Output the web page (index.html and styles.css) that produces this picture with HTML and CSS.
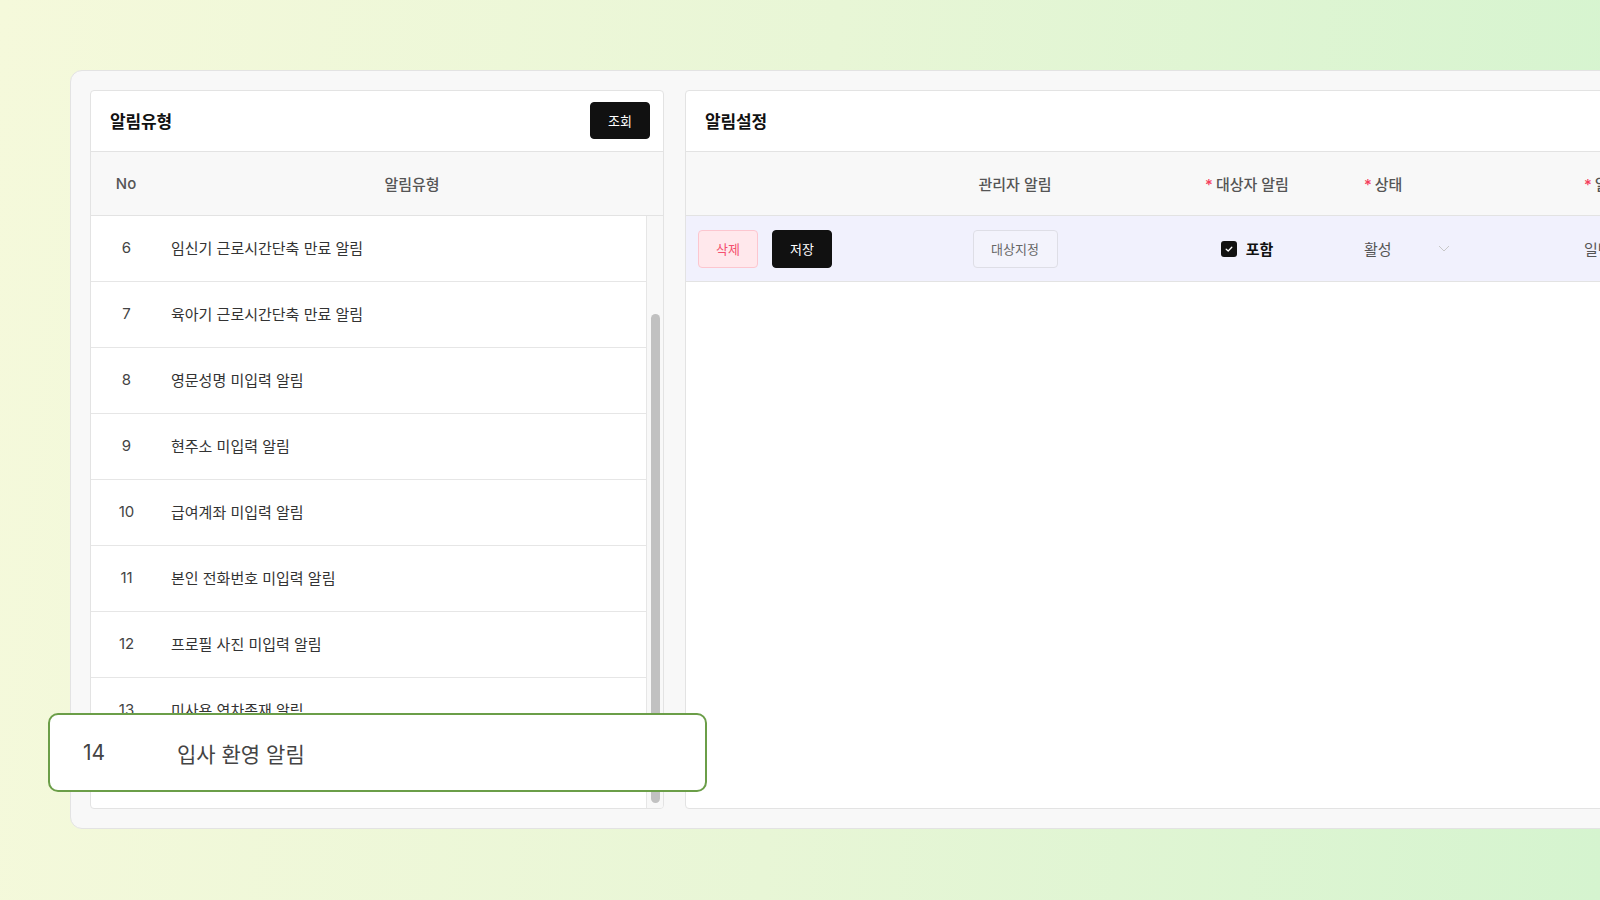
FILE: index.html
```html
<html lang="ko">
<head>
    <meta charset="UTF-8">
    <meta name="viewport" content="width=device-width, initial-scale=1.0">
    <title>알림설정</title>
    <link rel="stylesheet" href="styles.css">
</head>
<body>
    <div class="frame">
        <div class="card">
            <!-- 알림유형 목록 -->
            <section class="panel panel-types">
                <div class="panel-head">
                    <h2 class="panel-title">알림유형</h2>
                    <button class="btn btn-dark btn-search">조회</button>
                </div>
                <div class="type-head">
                    <div class="col-no">No</div>
                    <div class="col-name">알림유형</div>
                </div>
                <div class="type-body">
                    <div class="type-list">
                        <div class="type-row"><span class="col-no">6</span><span class="col-name">임신기 근로시간단축 만료 알림</span></div>
                        <div class="type-row"><span class="col-no">7</span><span class="col-name">육아기 근로시간단축 만료 알림</span></div>
                        <div class="type-row"><span class="col-no">8</span><span class="col-name">영문성명 미입력 알림</span></div>
                        <div class="type-row"><span class="col-no">9</span><span class="col-name">현주소 미입력 알림</span></div>
                        <div class="type-row"><span class="col-no">10</span><span class="col-name">급여계좌 미입력 알림</span></div>
                        <div class="type-row"><span class="col-no">11</span><span class="col-name">본인 전화번호 미입력 알림</span></div>
                        <div class="type-row"><span class="col-no">12</span><span class="col-name">프로필 사진 미입력 알림</span></div>
                        <div class="type-row"><span class="col-no">13</span><span class="col-name">미사용 연차존재 알림</span></div>
                        <div class="type-row"><span class="col-no">14</span><span class="col-name">입사 환영 알림</span></div>
                    </div>
                    <div class="scroll-track">
                        <div class="scroll-thumb"></div>
                    </div>
                </div>
            </section>

            <!-- 알림설정 -->
            <section class="panel panel-settings">
                <div class="panel-head">
                    <h2 class="panel-title">알림설정</h2>
                </div>
                <div class="set-grid set-head">
                    <div class="cell"></div>
                    <div class="cell cell-center">관리자 알림</div>
                    <div class="cell cell-center"><span class="req">*</span>대상자 알림</div>
                    <div class="cell"><span class="req">*</span>상태</div>
                    <div class="cell"><span class="req">*</span>일정</div>
                </div>
                <div class="set-grid set-row">
                    <div class="cell cell-actions">
                        <button class="btn btn-delete">삭제</button>
                        <button class="btn btn-dark">저장</button>
                    </div>
                    <div class="cell cell-center">
                        <button class="btn btn-outline">대상지정</button>
                    </div>
                    <div class="cell cell-center">
                        <label class="check">
                            <span class="check-box">
                                <svg width="10" height="10" viewBox="0 0 10 10"><path d="M2.2 5.2 L4.2 7 L7.8 3.2" fill="none" stroke="#fff" stroke-width="1.3" stroke-linecap="round" stroke-linejoin="round"/></svg>
                            </span>
                            포함
                        </label>
                    </div>
                    <div class="cell">
                        <div class="select">
                            <span>활성</span>
                            <svg width="12" height="7" viewBox="0 0 12 7"><path d="M1 1 L6 6 L11 1" fill="none" stroke="#c8c8c8" stroke-width="1"/></svg>
                        </div>
                    </div>
                    <div class="cell">일반</div>
                </div>
            </section>
        </div>
    </div>

    <!-- 선택한 알림유형 강조 -->
    <div class="focus-row">
        <span class="focus-no">14</span>
        <span class="focus-name">입사 환영 알림</span>
    </div>
</body>
</html>
```

FILE: styles.css
```css
* {
    box-sizing: border-box;
}

body {
    margin: 0;
    width: 1600px;
    height: 900px;
    overflow: hidden;
    position: relative;
    font-family: Inter, "Noto Sans CJK KR", sans-serif;
    color: #333;
    background: linear-gradient(95deg, #f5f9db 0%, #e8f6d6 50%, #d5f4cf 100%);
}

.frame {
    padding: 70px 0 0 70px;
}

.card {
    width: 1640px;
    height: 759px;
    padding: 19px;
    display: flex;
    gap: 21px;
    background-color: #f8f8f8;
    border: 1px solid #e3e3e3;
    border-radius: 12px;
}

.panel {
    display: flex;
    flex-direction: column;
    background-color: #fff;
    border: 1px solid #e3e3e3;
    border-radius: 4px;
    overflow: hidden;
}

.panel-types {
    width: 574px;
    flex-shrink: 0;
}

.panel-settings {
    flex: 1;
}

.panel-head {
    height: 61px;
    padding: 0 13px 2px 19px;
    display: flex;
    align-items: center;
    justify-content: space-between;
    border-bottom: 1px solid #e3e3e3;
    flex-shrink: 0;
}

.panel-title {
    margin: 0;
    font-size: 17px;
    font-weight: 600;
    letter-spacing: -0.01em;
    color: #111;
}

.btn {
    height: 38px;
    padding: 0;
    font-family: inherit;
    font-size: 13px;
    border-radius: 4px;
    cursor: pointer;
}

.btn-dark {
    width: 60px;
    color: #fff;
    background-color: #111;
    border: 1px solid #111;
}

.btn-search {
    height: 37px;
}

.btn-delete {
    width: 60px;
    color: #f4506f;
    background-color: #ffe8ec;
    border: 1px solid #fcc6cf;
}

.btn-outline {
    width: 85px;
    color: #666;
    background-color: #f3f3fc;
    border: 1px solid #dedee6;
}

/* 알림유형 표 */
.type-head {
    height: 64px;
    display: grid;
    grid-template-columns: 70px 1fr;
    align-items: center;
    background-color: #f8f8f8;
    border-bottom: 1px solid #e3e3e3;
    font-size: 15px;
    font-weight: 500;
    color: #555;
    flex-shrink: 0;
}

.type-head .col-no,
.type-head .col-name {
    text-align: center;
}

.type-body {
    flex: 1;
    display: flex;
    min-height: 0;
}

.type-list {
    flex: 1;
    overflow: hidden;
}

.type-row {
    height: 66px;
    padding-bottom: 2px;
    display: grid;
    grid-template-columns: 71px 1fr;
    align-items: center;
    border-bottom: 1px solid #e6e6e6;
}

.type-row .col-no {
    text-align: center;
    font-size: 15px;
    color: #444;
}

.type-row .col-name {
    padding-left: 9px;
    font-size: 15px;
    color: #333;
}

.scroll-track {
    width: 17px;
    padding: 98px 0 0 4px;
    background-color: #f8f8f8;
    border-left: 1px solid #e6e6e6;
}

.scroll-thumb {
    width: 9px;
    height: 489px;
    background-color: #c1c1c1;
    border-radius: 5px;
}

/* 알림설정 표 */
.set-grid {
    display: grid;
    grid-template-columns: 200px 258px 206px 220px 1fr;
    align-items: center;
}

.set-head {
    height: 64px;
    background-color: #f8f8f8;
    border-bottom: 1px solid #e3e3e3;
    font-size: 15px;
    font-weight: 500;
    color: #555;
}

.set-row {
    height: 66px;
    background-color: #f1f1fd;
    border-bottom: 1px solid #e3e3e3;
    font-size: 15px;
    color: #555;
}

.cell {
    padding-left: 14px;
    white-space: nowrap;
}

.cell-center {
    padding-left: 0;
    text-align: center;
}

.cell-actions {
    padding-left: 12px;
    display: flex;
    gap: 14px;
}

.req {
    color: #f53d5d;
    margin-right: 3px;
}

.check {
    display: inline-flex;
    align-items: center;
    gap: 9px;
    font-weight: 700;
    color: #111;
}

.check-box {
    width: 16px;
    height: 16px;
    display: flex;
    align-items: center;
    justify-content: center;
    background-color: #111;
    border-radius: 3px;
}

.select {
    width: 86px;
    display: flex;
    align-items: center;
    justify-content: space-between;
}

/* 강조된 행 */
.focus-row {
    position: absolute;
    left: 48px;
    top: 713px;
    width: 659px;
    height: 79px;
    padding-left: 33px;
    display: grid;
    grid-template-columns: 94px 1fr;
    align-items: center;
    background-color: #fff;
    border: 2px solid #6b9e48;
    border-radius: 10px;
    font-size: 21px;
    color: #444;
}
```
